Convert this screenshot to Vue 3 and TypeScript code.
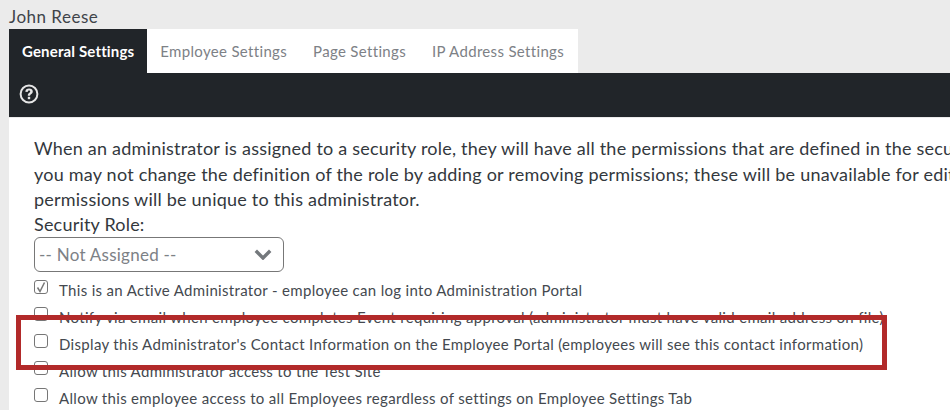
<script setup lang="ts">
const tabs: string[] = ['General Settings', 'Employee Settings', 'Page Settings', 'IP Address Settings']
const rows: { label: string; checked: boolean }[] = [
  { label: 'This is an Active Administrator - employee can log into Administration Portal', checked: true },
  { label: 'Notify via email when employee completes Event requiring approval (administrator must have valid email address on file)', checked: false },
  { label: "Display this Administrator's Contact Information on the Employee Portal (employees will see this contact information)", checked: false },
  { label: 'Allow this Administrator access to the Test Site', checked: false },
  { label: 'Allow this employee access to all Employees regardless of settings on Employee Settings Tab', checked: false },
]
</script>

<template>
  <div class="page">
    <div class="name">John Reese</div>
    <div class="tabs">
      <div v-for="(t, i) in tabs" :key="t" class="tab" :class="{ active: i === 0 }">{{ t }}</div>
    </div>
    <div class="bar">
      <svg width="20" height="20" viewBox="0 0 20 20" class="help">
        <circle cx="10" cy="10" r="8.400" fill="none" stroke="#e6e6e6" stroke-width="2" />
        <path d="M6.300 7.800c0-2.200 1.600-3.400 3.800-3.400 2.200 0 3.700 1.200 3.700 3 0 2.600-2.700 2.500-2.700 4.400H8.800c0-3 2.400-3 2.400-4.300 0-.7-.4-1.100-1.200-1.100-.8 0-1.300.6-1.300 1.500z" fill="#e6e6e6" />
        <rect x="8.800" y="12.800" width="2.400" height="2.400" fill="#e6e6e6" />
      </svg>
    </div>
    <div class="panel">
      <p class="intro">When an administrator is assigned to a security role, they will have all the permissions that are defined in the security role;<br />you may not change the definition of the role by adding or removing permissions; these will be unavailable for edit. Any additional<br />permissions will be unique to this administrator.</p>
      <div class="label">Security Role:</div>
      <div class="select">
        <span>-- Not Assigned --</span>
        <svg width="18" height="11" viewBox="0 0 18 11"><path d="M1.800 1.800L9 9l7.200-7.200" fill="none" stroke="#74787c" stroke-width="3.400" /></svg>
      </div>
      <div class="rows">
        <div v-for="r in rows" :key="r.label" class="row">
          <span class="check">
            <svg v-if="r.checked" width="14" height="14" viewBox="0 0 14 14"><path d="M3.500 7.500l2.500 4 4.500-9" fill="none" stroke="#777" stroke-width="1.500" /></svg>
          </span>
          <span class="text">{{ r.label }}</span>
        </div>
      </div>
    </div>
    <div class="highlight"></div>
  </div>
</template>

<style>
body { margin: 0; }
</style>

<style scoped>
.page {
  position: relative;
  width: 950px;
  height: 410px;
  overflow: hidden;
  background: #ebebeb;
  padding-left: 9px;
  box-sizing: border-box;
  font-family: Lato, "Noto Sans", sans-serif;
  color: #3f444a;
}
.name {
  height: 29px;
  padding-top: 7px;
  box-sizing: border-box;
  font-size: 17px;
  letter-spacing: 0.5px;
  line-height: 20px;
  white-space: nowrap;
}
.tabs { display: flex; height: 44px; width: 569px; background: #fff; }
.tab {
  display: flex;
  align-items: center;
  padding: 0 13px;
  font-size: 15px;
  letter-spacing: 0.33px;
  color: #7d8186;
  white-space: nowrap;
}
.tab.active { background: #212529; color: #fff; font-weight: 700; letter-spacing: 0.15px; }
.bar {
  height: 44px;
  background: #212529;
  display: flex;
  align-items: center;
  padding: 0 0 2px 10px;
  box-sizing: border-box;
}
.panel {
  margin-top: 1px;
  height: 300px;
  background: #fff;
  padding: 18px 0 0 25px;
  white-space: nowrap;
}
.intro { margin: 0; font-size: 18px; letter-spacing: 0.22px; line-height: 25.500px; color: #33383d; }
.label { font-size: 18px; letter-spacing: 0.2px; line-height: 25px; margin-top: -1px; color: #33383d; }
.select {
  box-sizing: border-box;
  width: 250px;
  height: 35px;
  border: 1px solid #777;
  border-radius: 6px;
  display: flex;
  align-items: center;
  justify-content: space-between;
  padding: 0 11px 0 4px;
  font-size: 17px;
  letter-spacing: 0.25px;
  color: #7d8186;
}
.rows { margin-top: 5px; }
.row { display: flex; align-items: center; height: 27px; }
.check {
  box-sizing: border-box;
  width: 14px;
  height: 14px;
  margin-right: 11px;
  margin-top: -6px;
  border: 1px solid #767676;
  border-radius: 3px;
  background: #fff;
  display: flex;
}
.check svg { display: block; margin: -1px; }
.text { font-size: 15px; letter-spacing: 0.32px; color: #44494f; }
.highlight {
  position: absolute;
  left: 16px;
  top: 315px;
  width: 871px;
  height: 55px;
  box-sizing: border-box;
  border: 5px solid #b22a2a;
}
</style>
